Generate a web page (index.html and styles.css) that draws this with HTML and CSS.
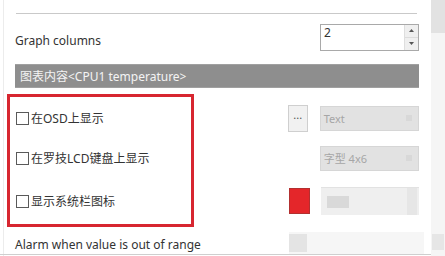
FILE: index.html
```html
<!DOCTYPE html>
<html>
<head>
<meta charset="utf-8">
<link rel="stylesheet" href="styles.css">
</head>
<body>
<div class="window">
  <div class="content">
    <div class="divider"></div>
    <div class="row graph-row">
      <span class="label">Graph columns</span>
      <div class="spinbox">
        <span class="spin-value">2</span>
        <div class="spin-buttons">
          <span class="spin-btn"><svg width="5" height="3" viewBox="0 0 5 3"><path d="M0 3L2.5 0L5 3Z" fill="#555"/></svg></span>
          <span class="spin-btn"><svg width="5" height="3" viewBox="0 0 5 3"><path d="M0 0L2.5 3L5 0Z" fill="#555"/></svg></span>
        </div>
      </div>
    </div>
    <div class="section-header">图表内容&lt;CPU1 temperature&gt;</div>
    <div class="options">
      <div class="row option-row r1">
        <label class="check"><span class="box"></span>在OSD上显示</label>
        <span class="dots-btn">...</span>
        <div class="combo"><span>Text</span><span class="combo-arrow"></span></div>
      </div>
      <div class="row option-row r2">
        <label class="check"><span class="box"></span>在罗技LCD键盘上显示</label>
        <div class="combo"><span>字型 4x6</span><span class="combo-arrow"></span></div>
      </div>
      <div class="row option-row r3">
        <label class="check"><span class="box"></span>显示系统栏图标</label>
        <span class="swatch"></span>
        <div class="icon-combo"><span class="icon-preview"></span><span class="icon-combo-btn"></span></div>
      </div>
    </div>
    <div class="row alarm-row">
      <span class="label">Alarm when value is out of range</span>
      <div class="alarm-control"><span class="alarm-left"></span></div>
    </div>
    <div class="bottom-line"></div>
    <div class="highlight"></div>
  </div>
  <div class="scrollbar">
    <div class="thumb"></div>
    <div class="track"></div>
    <div class="arrow-btn"></div>
  </div>
</div>
</body>
</html>
```
FILE: styles.css
```css
html, body {
  margin: 0;
  padding: 0;
  background: #ffffff;
}
body {
  font-family: "Noto Sans", "Noto Sans CJK SC", sans-serif;
  font-size: 12px;
  color: #333333;
}
.window {
  display: flex;
  width: 445px;
  height: 256px;
  overflow: hidden;
}
.content {
  position: relative;
  width: 428px;
  padding: 13px 12px 0 11px;
  border-left: 1px solid #ececec;
  margin-left: 3px;
  box-sizing: border-box;
  display: flex;
  flex-direction: column;
}
.divider {
  height: 1px;
  background: #c9c9c9;
  margin: 0 2px 0 1px;
}
.row {
  display: flex;
  align-items: center;
}
.graph-row {
  margin-top: 9px;
  height: 28px;
}
.label {
  flex: 1;
  padding-left: 0;
}
.graph-row .label {
  padding-top: 6px;
}
.spinbox {
  width: 99px;
  height: 27px;
  border: 1px solid #a9a9a9;
  box-sizing: border-box;
  display: flex;
  background: #fff;
}
.spin-value {
  flex: 1;
  padding: 2px 0 0 3px;
  font-size: 12px;
  line-height: 12px;
}
.spin-buttons {
  width: 13px;
  display: flex;
  flex-direction: column;
  border-left: 1px solid #dedede;
}
.spin-btn {
  flex: 1;
  display: flex;
  align-items: center;
  justify-content: center;
  background: #efefef;
  border-bottom: 1px solid #dcdcdc;
}
.spin-btn:last-child {
  border-bottom: none;
}
.section-header {
  margin-top: 13px;
  height: 24px;
  background: #8e8e8e;
  border-top: 1px solid #a0a0a0;
  border-bottom: 1px solid #a0a0a0;
  box-sizing: border-box;
  color: #f4f4f4;
  display: flex;
  align-items: center;
  padding-left: 5px;
}
.options {
  display: flex;
  flex-direction: column;
}
.option-row {
  height: 28px;
}
.r1 { margin-top: 16px; }
.r2 { margin-top: 12px; }
.r3 { margin-top: 15px; }
.check {
  display: flex;
  align-items: center;
  width: 274px;
  padding-left: 1px;
  color: #333;
}
.box {
  width: 11px;
  height: 11px;
  border: 1px solid #5a5a5a;
  margin-right: 2px;
  background: #fff;
}
.r2 .check { margin-right: 32px; }
.dots-btn {
  width: 20px;
  height: 27px;
  border: 1px solid #cfcfcf;
  background: #f1f1f1;
  box-sizing: border-box;
  margin-right: 12px;
  text-align: center;
  line-height: 18px;
  color: #555;
  font-size: 11px;
}
.combo {
  width: 100px;
  height: 25px;
  background: #e2e2e2;
  border: 1px solid #d6d6d6;
  box-sizing: border-box;
  color: #a6a6a6;
  display: flex;
  align-items: center;
  justify-content: space-between;
  padding: 0 6px 0 3px;
  font-size: 11px;
}
.combo-arrow {
  width: 6px;
  height: 6px;
  background: #d8d8d8;
}
.swatch {
  width: 22px;
  height: 26px;
  background: #e4262a;
  border: 1px solid #b23030;
  box-sizing: border-box;
  margin-right: 11px;
}
.icon-combo {
  width: 98px;
  height: 28px;
  background: #efefef;
  border-top: 1px solid #e2e2e2;
  box-sizing: border-box;
  display: flex;
  align-items: center;
  justify-content: space-between;
  padding-left: 6px;
}
.icon-preview {
  width: 22px;
  height: 12px;
  background: #d9d9d9;
}
.icon-combo-btn {
  width: 10px;
  height: 27px;
  background: #e6e6e6;
  margin-right: 2px;
}
.alarm-row {
  margin-top: 17px;
  height: 22px;
}
.alarm-row .label {
  padding-top: 2px;
}
.alarm-control {
  width: 135px;
  height: 22px;
  margin-right: -5px;
  background: #f6f6f6;
  display: flex;
  align-items: center;
}
.alarm-left {
  width: 18px;
  height: 18px;
  background: #e4e4e4;
}
.bottom-line {
  height: 1px;
  background: #cfcfcf;
  margin-left: -15px;
  margin-right: -12px;
}
.highlight {
  position: absolute;
  left: 3px;
  top: 94px;
  width: 187px;
  height: 133px;
  border: 3px solid #d72630;
  box-sizing: border-box;
}
.scrollbar {
  width: 14px;
  margin-left: 0;
  display: flex;
  flex-direction: column;
  background: #f5f5f5;
}
.thumb {
  height: 33px;
  background: #e2e2e2;
}
.track {
  flex: 1;
}
.arrow-btn {
  height: 16px;
  margin: 0 1px 6px 1px;
  background: #e6e6e6;
}
```
